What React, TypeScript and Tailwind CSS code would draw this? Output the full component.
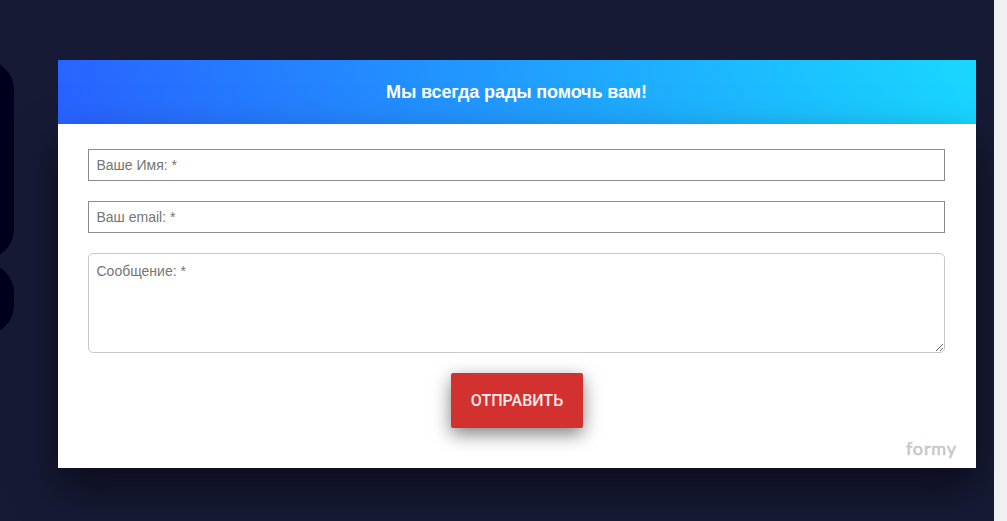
import { useState } from "react";

const FIELDS = [
  { name: "name", type: "text", label: "Ваше Имя: *" },
  { name: "email", type: "email", label: "Ваш email: *" },
];

function Backdrop() {
  return (
    <div className="absolute left-0 top-[60px] w-[14px] space-y-1">
      <div className="h-[199px] rounded-r-[30px] bg-[#00001e] -ml-20" />
      <div className="h-[72px] rounded-r-[30px] bg-[#00001e] -ml-20" />
    </div>
  );
}

function ContactForm() {
  const [values, setValues] = useState<Record<string, string>>({});
  const update = (key: string, value: string) => setValues({ ...values, [key]: value });

  return (
    <form
      onSubmit={e => e.preventDefault()}
      className="relative h-[344px] bg-white px-[30px] pt-[25px] shadow-[0_20px_40px_rgba(0,0,0,0.5)]"
    >
      <div className="flex flex-col gap-5 pr-px">
        {FIELDS.map(f => (
          <input key={f.name} type={f.type} placeholder={f.label}
            value={values[f.name] ?? ""} onChange={e => update(f.name, e.target.value)}
            className="h-8 w-full border border-[#8b8b8b] bg-white px-[7.5px] text-[14px] text-black placeholder:text-[#757575] outline-none" />
        ))}
        <textarea placeholder="Сообщение: *"
          value={values.message ?? ""} onChange={e => update("message", e.target.value)}
          className="block h-[100px] w-full resize rounded-[5px] border border-[#c8c8c8] bg-white px-[7.5px] py-[7px] text-[14px] leading-5 text-black placeholder:text-[#757575] outline-none" />
      </div>
      <div className="mt-5 flex justify-center">
        <button type="submit"
          className="h-[55px] w-[132px] cursor-pointer rounded-[2px] bg-[#d3312f] font-['Roboto',sans-serif] text-[16px] font-medium text-white/90 shadow-[0_6px_18px_rgba(0,0,0,0.5)]">
          ОТПРАВИТЬ
        </button>
      </div>
      <svg className="absolute bottom-[6px] right-[18px]" width="54" height="26" viewBox="0 0 54 26">
        <text x="2" y="18.5" textLength="50" fontSize="18" fill="#c8c8c8" stroke="#c8c8c8" strokeWidth="0.6" className="font-['Lato',sans-serif]">formy</text>
      </svg>
    </form>
  );
}

export default function App() {
  return (
    <div className="flex h-[521px] w-[1007px] overflow-hidden bg-[#f0f0f0] font-['Liberation_Sans',Arial,sans-serif]">
      <main className="relative w-[994px] overflow-hidden bg-[#161a35] pl-[58px] pr-[18px] pt-[60px]">
        <Backdrop />
        <section className="relative">
          <header className="flex h-16 items-center justify-center bg-linear-[75deg,#2962ff,#18d8ff]">
            <h1 className="pr-px text-[18px] font-bold tracking-[-0.12px] text-white">Мы всегда рады помочь вам!</h1>
          </header>
          <ContactForm />
        </section>
      </main>
    </div>
  );
}
